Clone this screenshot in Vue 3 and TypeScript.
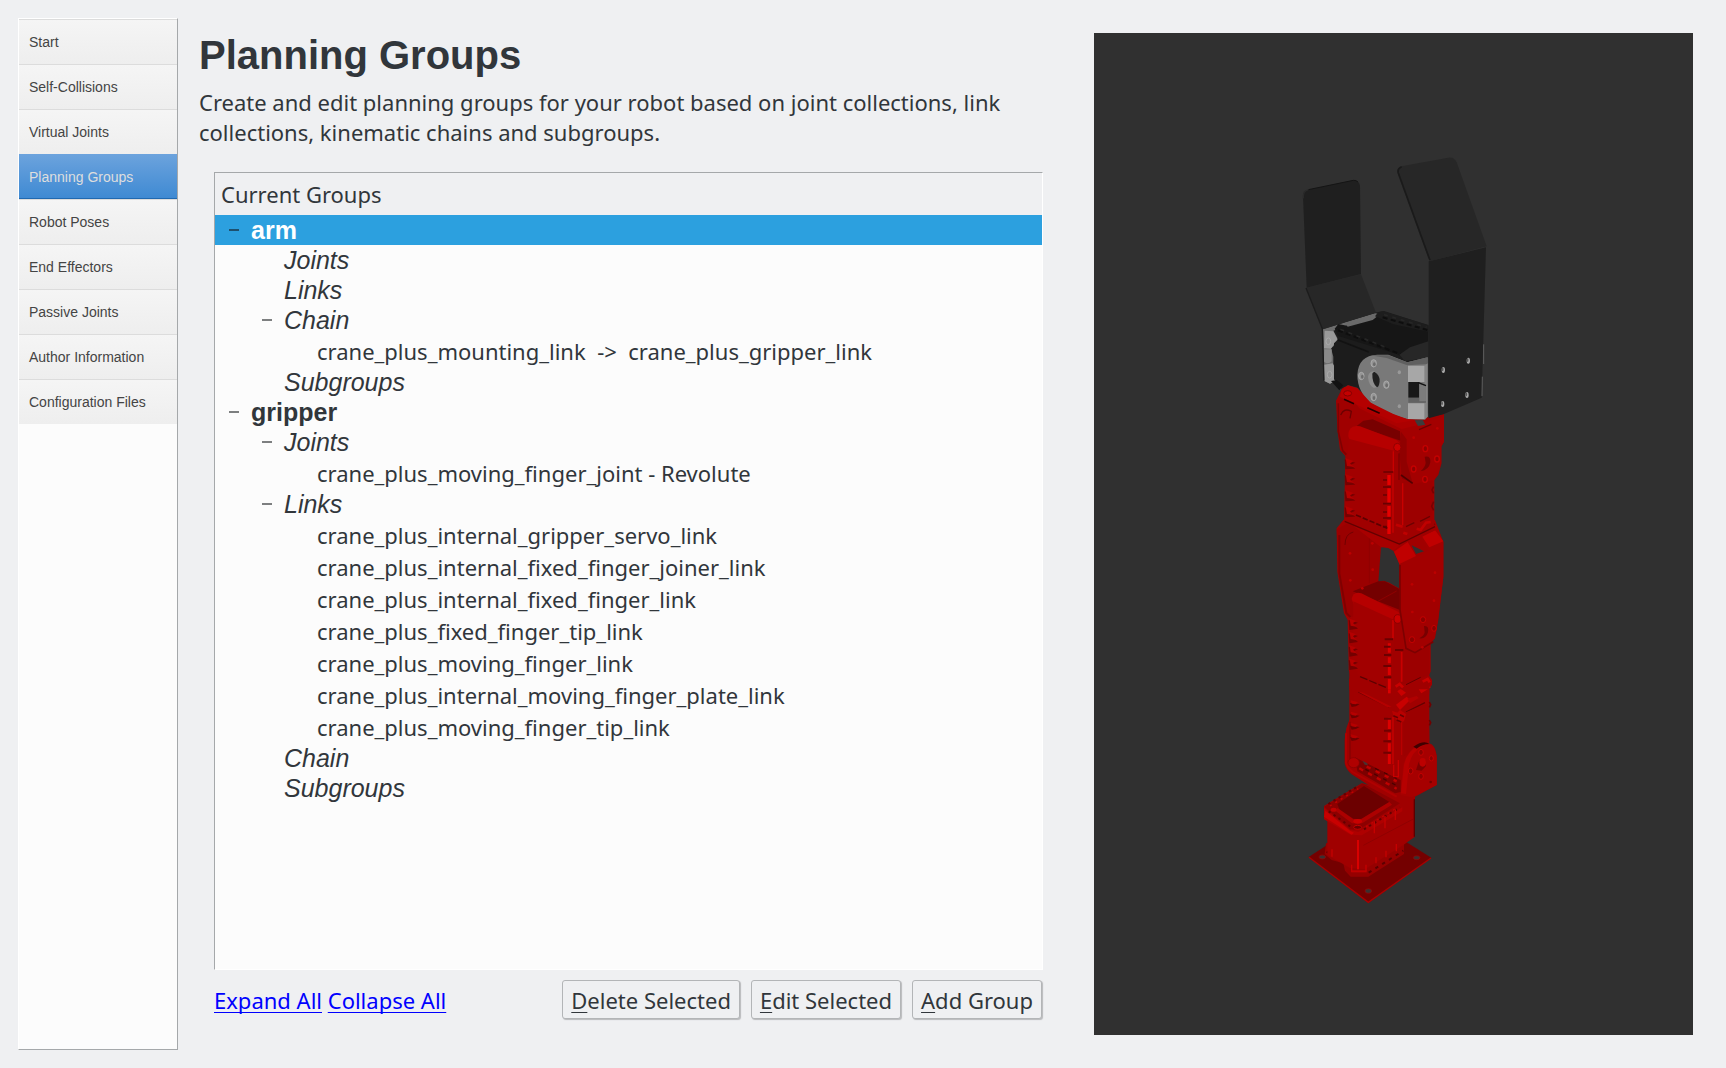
<script setup lang="ts">
interface TreeRow {
  label: string
  level: number
  kind: 'group' | 'section' | 'item'
  open?: boolean
  selected?: boolean
}

const steps: string[] = [
  'Start',
  'Self-Collisions',
  'Virtual Joints',
  'Planning Groups',
  'Robot Poses',
  'End Effectors',
  'Passive Joints',
  'Author Information',
  'Configuration Files',
]
const activeStep = 'Planning Groups'

const rows: TreeRow[] = [
  { label: 'arm', level: 0, kind: 'group', open: true, selected: true },
  { label: 'Joints', level: 1, kind: 'section' },
  { label: 'Links', level: 1, kind: 'section' },
  { label: 'Chain', level: 1, kind: 'section', open: true },
  { label: 'crane_plus_mounting_link  ->  crane_plus_gripper_link', level: 2, kind: 'item' },
  { label: 'Subgroups', level: 1, kind: 'section' },
  { label: 'gripper', level: 0, kind: 'group', open: true },
  { label: 'Joints', level: 1, kind: 'section', open: true },
  { label: 'crane_plus_moving_finger_joint - Revolute', level: 2, kind: 'item' },
  { label: 'Links', level: 1, kind: 'section', open: true },
  { label: 'crane_plus_internal_gripper_servo_link', level: 2, kind: 'item' },
  { label: 'crane_plus_internal_fixed_finger_joiner_link', level: 2, kind: 'item' },
  { label: 'crane_plus_internal_fixed_finger_link', level: 2, kind: 'item' },
  { label: 'crane_plus_fixed_finger_tip_link', level: 2, kind: 'item' },
  { label: 'crane_plus_moving_finger_link', level: 2, kind: 'item' },
  { label: 'crane_plus_internal_moving_finger_plate_link', level: 2, kind: 'item' },
  { label: 'crane_plus_moving_finger_tip_link', level: 2, kind: 'item' },
  { label: 'Chain', level: 1, kind: 'section' },
  { label: 'Subgroups', level: 1, kind: 'section' },
]

const actions: string[] = ['Delete Selected', 'Edit Selected', 'Add Group']

// Screw notches along the servo cases: [x, y] of each notch.
const column = (x: number, y: number, step: number, n: number): [number, number][] =>
  Array.from({ length: n }, (_, i) => [x, y + i * step] as [number, number])
</script>

<template>
  <main class="window">
    <nav class="steps">
      <a v-for="s in steps" :key="s" class="step" :class="{ active: s === activeStep }">{{ s }}</a>
    </nav>

    <section class="content">
      <h1>Planning Groups</h1>
      <p class="intro">Create and edit planning groups for your robot based on joint collections, link<br />collections, kinematic chains and subgroups.</p>

      <div class="tree">
        <div class="tree-head">Current Groups</div>
        <div
          v-for="(r, i) in rows"
          :key="i"
          class="row"
          :class="[r.kind, 'l' + r.level, { selected: r.selected }]"
        >
          <span class="toggle" :class="{ open: r.open }"></span>
          <span class="label">{{ r.label }}</span>
        </div>
      </div>

      <footer class="controls">
        <div class="links"><a>Expand All</a> <a>Collapse All</a></div>
        <div class="buttons">
          <button v-for="a in actions" :key="a"><span class="key">{{ a[0] }}</span>{{ a.slice(1) }}</button>
        </div>
      </footer>
    </section>

    <svg class="viewer" viewBox="1094 33 599 1002" width="599" height="1002">
      <!-- base plate and base servo -->
      <g transform="translate(1290 780) scale(.33333)">
        <path d="M56 231 L235 115 L424 233 L235 369Z" fill="#740000" />
        <path d="M57 232 L235 367 L423 234" fill="none" stroke="#a80000" stroke-width="4" />
        <g fill="#3a3030" stroke="#a00000" stroke-width="2">
          <ellipse cx="97" cy="231" rx="10" ry="6" />
          <ellipse cx="380" cy="233" rx="10" ry="6" />
          <ellipse cx="235" cy="333" rx="10" ry="7" />
        </g>
        <path d="M108 190 L104 222 L125 240 L160 250 L165 272 L182 290 L235 290 L342 222 L342 170Z" fill="#960000" />
        <path d="M236 278 L340 212 M110 215 L165 252" stroke="#5c0000" stroke-width="6" stroke-dasharray="10 14" />
        <path d="M102 78 L215 10 L375 50 L375 170 L340 195 L225 268 L180 264 L112 225 L112 120 L102 115Z" fill="#a00000" />
        <path d="M102 80 L218 10 L330 70 L205 150 L180 148Z" fill="#8c0000" />
        <path d="M142 72 L222 18 L298 66 L212 118 L190 116 L148 88Z" fill="#6c0000" />
        <path d="M142 84 L190 118 L213 118 L298 66 L306 74 L216 130 L186 130 L138 94Z" fill="#ac0000" />
        <path d="M102 84 L180 150 L205 156 L337 82 L337 94 L215 166 L182 164 L102 118Z" fill="#ae0000" />
        <path d="M106 92 L180 152 L192 158 L185 164 L102 110Z" fill="#c80000" />
        <path d="M115 72 L205 18 M116 94 L182 140 M222 148 L330 82" stroke="#620000" stroke-width="6" stroke-dasharray="7 11" />
        <path d="M120 78 L205 26 M228 140 L320 84" stroke="#c40000" stroke-width="4" stroke-dasharray="6 13" />
        <path d="M204 180 V268" stroke="#d80000" stroke-width="6" />
        <path d="M373 58 V170" stroke="#5c0000" stroke-width="4" />
        <path d="M220 196 L372 116" stroke="#860000" stroke-width="2" />
        <path d="M253 124V160M285 108V145M316 88V120M258 232V250M288 212V232M319 192V214M228 254V274M185 254V276M126 208V230" stroke="#c40000" stroke-width="4" />
        <path d="M184 274 H230" stroke="#c00000" stroke-width="6" />
        <ellipse cx="203" cy="124" rx="13" ry="7" fill="#c80000" />
        <ellipse cx="131" cy="89" rx="9" ry="6" fill="#c00000" />
        <ellipse cx="203" cy="142" rx="12" ry="6" fill="#6a0000" stroke="#c40000" stroke-width="3" />
      </g>

      <!-- shoulder servo and lower bracket -->
      <g transform="translate(1300 670) scale(.33333)">
        <path d="M148 150 L139 175 L134 210 L134 280 Q137 298 155 313 L232 362 L292 388 L345 380 L410 345 L410 255 Q405 225 388 220 L388 0 L148 0 Z" fill="#a00000" />
        <path d="M138 190 V276 Q140 292 158 306 L290 380" fill="none" stroke="#b00000" stroke-width="6" />
        <path d="M150 155 V265 L272 325" fill="none" stroke="#8c0000" stroke-width="5" />
        <path d="M165 262 L302 330 L302 366 L285 370 L172 304Z" fill="#7c0000" />
        <path d="M186 270 L202 279 L203 286 L194 284Z" fill="#4a3030" />
        <path d="M178 295 L290 356 M200 290 L290 334" stroke="#c00000" stroke-width="7" stroke-dasharray="13 17" />
        <path d="M196 298 L296 350 M225 295 L290 325" stroke="#4c0000" stroke-width="4" stroke-dasharray="12 18" />
        <ellipse cx="161" cy="278" rx="17" ry="15" fill="#b00000" stroke="#840000" stroke-width="2" />
        <path d="M162 65 L275 120 L278 318 L160 258Z" fill="#a10000" />
        <path d="M148 25 L292 88 L388 45 L388 72 L290 122 L148 60Z" fill="#a00000" />
        <path d="M175 66 L266 111" stroke="#700000" stroke-width="4" />
        <path d="M172 64 L190 68 L275 110 L262 112Z" fill="#b40000" />
        <path d="M318 126 L375 98 M300 52 L380 10" stroke="#640000" stroke-width="4" />
        <path d="M292 64 L302 56 L318 68 L304 78Z M356 58 L386 42 L393 52 L364 70Z" fill="#c80000" />
        <path d="M288 104 L320 80 L330 90 L300 120Z" fill="#c80000" />
        <path d="M322 86 L350 78 L356 84 L330 100Z" fill="#b00000" />
        <path d="M310 130 L386 100 L388 215 L310 260Z" fill="#9c0000" />
        <path d="M305 145 V255" stroke="#bc0000" stroke-width="3" />
        <path d="M268 0 V70" stroke="#dc0000" stroke-width="8" />
        <path d="M268 143V177M268 188V210M268 220V245M268 252V282" stroke="#dc0000" stroke-width="9" />
        <path d="M279 140V282 M281 284 V320 H295 V270" fill="none" stroke="#c80000" stroke-width="4" />
        <path d="M256 12h18M254 36h20M252 146h22M252 182h22M250 214h24M250 248h24" stroke="#700000" stroke-width="6" />
        <g v-for="(p, i) in column(150, 95, 34, 4)" :key="i" :transform="`translate(${p[0]} ${p[1]})`">
          <path d="M0 4 L29 8 L18 14 L5 16Z" fill="#6c0000" />
          <path d="M2 -4 L24 2 L17 8 L5 6Z" fill="#b60000" />
        </g>
        <path d="M388 96l4 8-4 8M388 150l4 8-4 8" fill="none" stroke="#700000" stroke-width="5" />
        <path d="M302 375 L310 285 Q320 245 350 228 Q382 213 403 235 L410 260 V345 L345 378 L335 382Z" fill="#a60000" />
        <path d="M303 370 L312 285 Q322 240 358 228 L366 228 Q336 246 327 282 L318 372Z" fill="#b60000" />
        <path d="M340 230 Q372 209 388 222 Q366 222 350 236Z" fill="#400000" />
        <g fill="#8a0000" stroke="#c40000" stroke-width="3">
          <ellipse cx="363" cy="247" rx="7" ry="9" /><ellipse cx="394" cy="265" rx="6" ry="8" />
          <ellipse cx="332" cy="303" rx="7" ry="9" /><ellipse cx="363" cy="319" rx="7" ry="9" />
        </g>
        <path d="M355 278 Q365 258 378 272 L378 288 L365 302 L348 300Z" fill="#7c0000" />
        <ellipse cx="368" cy="277" rx="10" ry="13" fill="#bc0000" />
        <circle cx="392" cy="336" r="4" fill="#740000" />
        <path d="M276 122l16 6 8-8 18 12-6 22-14 4-18-20Z" fill="#b80000" />
        <path d="M280 137l14 6M300 134l12 6M290 150l14 6" stroke="#680000" stroke-width="5" />
      </g>

      <!-- forearm bracket and elbow servo -->
      <g transform="translate(1300 520) scale(.33333)">
        <path d="M110 25 L130 0 L405 0 L430 65 L430 170 L415 300 L405 355 L392 370 V455 L386 465 L396 480 V496 L388 500 V508 H154 V502 L148 498 V478 L154 472 L146 450 V430 L143 300 L132 280 L112 155Z" fill="#a00000" />
        <path d="M110 28 L138 12 L160 17 L245 80 L238 185 L175 245 L175 285 L150 292 L135 280 L115 160Z" fill="#9a0000" />
        <path d="M118 45 V160 L139 279 L151 291" fill="none" stroke="#800000" stroke-width="6" />
        <path d="M135 75 Q135 42 160 36" fill="none" stroke="#700000" stroke-width="3" />
        <path d="M208 50V190" stroke="#900000" stroke-width="3" />
        <path d="M243 82 Q265 78 280 92 L299 132 L299 206 L268 188 L250 182 L235 185Z" fill="#303030" />
        <path d="M160 17 L245 50 L300 75 L280 92 Q262 80 243 82Z" fill="#a80000" />
        <path d="M135 0 L295 67 L405 12" fill="none" stroke="#760000" stroke-width="5" />
        <path d="M158 214 L235 184 L255 184 L300 208 V270Z" fill="#740000" />
        <path d="M230 246 L290 213" stroke="#900000" stroke-width="3" />
        <path d="M155 237 Q160 213 184 220 L294 275 Q304 283 300 304 L280 306 L161 252Z" fill="#b60000" />
        <path d="M160 244 L283 300 L276 500 L175 465 L158 420Z" fill="#a20000" />
        <path d="M305 390 L388 382 L388 465 L304 495Z" fill="#9c0000" />
        <path d="M279 300 V355 M305 396 V485" fill="none" stroke="#c80000" stroke-width="5" />
        <path d="M268 370V398M268 412V430M268 440V465M268 476V508" stroke="#dc0000" stroke-width="9" />
        <path d="M254 358h25M252 380h20M252 405h22M250 438h24M252 472h22M285 390h25" stroke="#6a0000" stroke-width="6" />
        <ellipse cx="293" cy="297" rx="11" ry="13" fill="#c80000" stroke="#8c0000" stroke-width="3" />
        <g v-for="(p, i) in column(146, 300, 40, 4)" :key="i" :transform="`translate(${p[0]} ${p[1]})`">
          <path d="M0 0 L28 8 L15 14 L28 26 L2 30Z" fill="#740000" />
          <path d="M3 -4 L22 3 L13 9 L24 20 L6 17Z" fill="#b40000" />
        </g>
        <path d="M180 470 L262 504" stroke="#5c0000" stroke-width="4" stroke-dasharray="24 6" />
        <path d="M282 92 L322 65 L350 110 L385 92 L365 50 L405 30 L430 65 V170 L414 300 L405 345 Q380 385 345 397 L310 385 L300 260 L298 130Z" fill="#a20000" />
        <path d="M335 76 L372 94 L348 102Z" fill="#303030" />
        <path d="M282 95 L323 66 L348 108 L298 132Z M367 50 L405 31 L430 64 L388 82Z" fill="#c00000" />
        <path d="M300 135 V270 L318 385 L345 398 L400 365" fill="none" stroke="#7c0000" stroke-width="5" />
        <g fill="#8a0000" stroke="#c40000" stroke-width="3">
          <ellipse cx="369" cy="299" rx="8" ry="9" /><ellipse cx="402" cy="325" rx="7" ry="9" /><ellipse cx="336" cy="359" rx="8" ry="9" />
        </g>
        <path d="M372 318 Q388 316 384 337 Q378 358 358 355 Q373 347 374 337Z" fill="#780000" />
        <g fill="#bc0000"><circle v-for="(p, i) in ([[150,100],[217,70],[218,149],[151,181],[187,205],[405,158],[336,193],[402,242],[337,276],[367,382]] as [number, number][])" :key="i" :cx="p[0]" :cy="p[1]" r="4" /></g>
        <path d="M287 500 l12 -8 10 10 M368 485l15-8 6 10" fill="none" stroke="#c80000" stroke-width="8" />
        <path d="M318 494 L362 472" stroke="#600000" stroke-width="3" />
      </g>

      <!-- upper arm bracket and wrist servo -->
      <g transform="translate(1300 380) scale(.33333)">
        <path d="M108 62 L128 22 L150 20 L355 118 L432 102 V185 L424 200 V252 L415 285 L403 300 V440 L408 450 L300 495 L132 425 L136 228 L120 210 L113 155Z" fill="#a00000" />
        <path d="M115 70 V155 L128 212 L139 224" fill="none" stroke="#800000" stroke-width="5" />
        <path d="M128 22 L150 18 L250 85 L315 116 L350 122 L354 146 L322 160 L300 145 L178 85Z" fill="#ac0000" />
        <path d="M122 105 Q132 82 154 94 L150 115" fill="none" stroke="#6c0000" stroke-width="4" />
        <path d="M170 138 L190 122 L218 118 L300 154 L302 182Z" fill="#780000" />
        <path d="M145 168 Q145 132 180 139 L290 181 Q306 192 300 214 L276 213 L149 181Z" fill="#b60000" />
        <path d="M146 176 L281 212 L270 450 L168 405 L138 388Z" fill="#a20000" />
        <path d="M310 304 L398 298 V405 L309 435Z" fill="#9d0000" />
        <path d="M302 148 L355 135 L432 108 V185 L424 198 L424 250 L403 300 L340 312 L306 270Z" fill="#a30000" />
        <path d="M303 155 L320 178 V245 L338 310 L306 296 L298 220Z" fill="#900000" />
        <path d="M303 285 L338 310" stroke="#500000" stroke-width="5" />
        <path d="M357 149 L394 133" stroke="#6c0000" stroke-width="4" />
        <path d="M280 214 V278 M279 280V458 M308 310 V435" fill="none" stroke="#c80000" stroke-width="4" />
        <path d="M267 285V315M267 325V368M267 378V410M267 420V462" stroke="#e60000" stroke-width="10" />
        <path d="M250 276h30M249 300h12M249 321h24M249 345h12M249 371h24M249 396h12M249 414h24M249 440h12" stroke="#680000" stroke-width="5" />
        <path d="M297 220V300" stroke="#740000" stroke-width="3" />
        <ellipse cx="292" cy="202" rx="11" ry="12" fill="#c80000" stroke="#8e0000" stroke-width="3" />
        <g v-for="(p, i) in column(136, 238, 48, 4)" :key="i" :transform="`translate(${p[0]} ${p[1]})`">
          <path d="M-2 0 L30 10 L15 17 L30 28 L0 30Z" fill="#760000" />
          <path d="M1 -3 L24 5 L14 13 L27 23 L5 20Z" fill="#b40000" />
        </g>
        <g fill="#8c0000" stroke="#c40000" stroke-width="4">
          <ellipse cx="376" cy="206" rx="7" ry="9" /><ellipse cx="411" cy="237" rx="7" ry="9" />
          <ellipse cx="341" cy="267" rx="7" ry="9" /><ellipse cx="375" cy="298" rx="7" ry="9" />
        </g>
        <path d="M374 230 Q393 226 391 247 Q387 270 362 274 Q376 260 377 248Z" fill="#780000" />
        <circle cx="341" cy="173" r="4" fill="#bc0000" /><circle cx="412" cy="145" r="4" fill="#bc0000" />
        <path d="M168 405 L262 445" stroke="#5c0000" stroke-width="5" stroke-dasharray="16 6" />
        <path d="M134 424 L298 492 L405 440" fill="none" stroke="#620000" stroke-width="4" />
        <path d="M288 434l20 6M310 458l12 4M350 446l12 4 16-22 14-2" fill="none" stroke="#c00000" stroke-width="8" />
        <path d="M318 440l25-12M360 424l30-15" stroke="#6c0000" stroke-width="4" />
        <path d="M401 320l-5 10 5 10M401 365l-6 14 6 12" fill="none" stroke="#780000" stroke-width="5" />
      </g>

      <!-- gripper servo -->
      <g transform="translate(1280 280) scale(.33333)">
        <path d="M127 148 L285 98 L310 94 L445 135 V400 L340 395 L270 362 L232 322 L204 314 L184 326 L165 305 L132 300Z" fill="#1c1c1c" />
        <path d="M129 148 L285 100 L300 102 L190 140 L160 152 L172 174 L173 188 L153 205 L160 230 V255 L172 278 L170 300 L150 311 L132 302Z" fill="#6e6e6e" />
        <path d="M134 152 L160 154 L172 178 L153 206 L132 205Z M132 254 L158 250 L172 275 L170 300 L150 311 L132 302Z" fill="#999" />
        <path d="M133 208 H155 V244 Q145 255 132 245Z" fill="#8a8a8a" />
        <path d="M164 146 L175 132 L215 140 L295 105 L445 137 V235 L385 242 L350 222 L175 168Z" fill="#161616" />
        <path d="M194 128 L285 101 L296 106 L278 120 L203 140Z" fill="#6a6a6a" />
        <path d="M295 96 L312 93 L445 136 V155 L340 133 L285 109Z" fill="#1d1d1d" />
        <path d="M174 151 L365 224 M308 112 L442 150" stroke="#0e0e0e" stroke-width="6" stroke-dasharray="15 10" />
        <path d="M181 148 L320 203 M312 104 L440 142" stroke="#262626" stroke-width="5" stroke-dasharray="12 14" />
        <path d="M358 224 L390 202 L445 184 V233 L375 244Z" fill="#272727" />
        <path d="M162 190 L175 178 L270 214 L240 240 V325 L204 314 L185 325 L162 298Z" fill="#1c1c1c" />
        <path d="M174 180 L266 216" stroke="#121212" stroke-width="5" />
        <path d="M153 303 L170 300 L190 316 L178 331Z" fill="#121212" />
        <path d="M292 224 H325 L382 247 L443 232 V410 L435 419 L383 418 Q320 400 272 368 Q232 335 232 284 Q235 226 292 224Z" fill="#797979" />
        <path d="M270 226 L325 226 L382 247 L443 232 V252 L382 256 L320 234Z" fill="#606060" />
        <path d="M385 306 H418 V353 H385Z" fill="#181818" />
        <path d="M384 257 H434 V306 H384Z M384 370 H434 V417 H384Z" fill="#a7a7a7" />
        <path d="M434 257 L443 250 V410 L434 417Z" fill="#858585" />
        <path d="M418 308 L438 316 V368 H385 V354 H418Z" fill="#626262" />
        <path d="M418 312 L438 318 V364 H418Z" fill="#7c7c7c" />
        <path d="M415 308 L438 317" stroke="#111" stroke-width="4" />
        <path d="M264 291 Q265 276 281 274 Q300 283 299 310 Q294 326 280 323 Q266 315 264 291Z" fill="#8e8e8e" />
        <path d="M277 281 Q279 275 284 276 Q300 285 299 305 Q297 320 291 322 Q276 309 277 281Z" fill="#202020" />
        <g fill="#949494" stroke="#aaa" stroke-width="3">
          <ellipse cx="281" cy="250" rx="8" ry="11" /><ellipse cx="244" cy="288" rx="8" ry="11" />
          <ellipse cx="319" cy="314" rx="8" ry="11" /><ellipse cx="281" cy="351" rx="8" ry="11" />
          <ellipse cx="145" cy="184" rx="7" ry="10" /><ellipse cx="149" cy="284" rx="7" ry="10" />
        </g>
        <g fill="#6c6c6c"><ellipse cx="283" cy="253" rx="4" ry="6" /><ellipse cx="247" cy="290" rx="4" ry="6" /><ellipse cx="320" cy="316" rx="4" ry="6" /><ellipse cx="282" cy="354" rx="4" ry="6" /></g>
        <ellipse cx="358" cy="277" rx="5" ry="6" fill="#999" /><ellipse cx="358" cy="379" rx="5" ry="6" fill="#999" />
        <path d="M184 330 L204 316 L232 324 L272 368 L340 402 L383 418 L405 420 L350 430 L180 350Z" fill="#b40000" />
        <path d="M192 358 L222 371 M262 383 L299 400" stroke="#240000" stroke-width="5" />
        <ellipse cx="203" cy="340" rx="12" ry="8" fill="#c40000" stroke="#840000" stroke-width="3" />
        <path d="M404 421 L428 420 L436 434 L414 438Z" fill="#3c3c3c" />
        <path d="M78 24 L243 -17 L288 98 L127 148Z" fill="#272727" />
        <path d="M78 24 L127 146 L132 302" fill="none" stroke="#1c1c1c" stroke-width="4" />
        <path d="M446 -56 L618 -98 L605 353 L492 402 L446 415Z" fill="#1f1f1f" />
        <path d="M611 193 V252 M607 290 L606 348" fill="none" stroke="#777" stroke-width="2" />
        <g fill="#aaa"><ellipse cx="490" cy="270" rx="5" ry="9" /><ellipse cx="565" cy="242" rx="5" ry="9" /><ellipse cx="488" cy="372" rx="5" ry="9" /><ellipse cx="561" cy="345" rx="5" ry="9" /></g>
        <g fill="#555"><ellipse cx="488" cy="268" rx="2.5" ry="6" /><ellipse cx="563" cy="240" rx="2.5" ry="6" /><ellipse cx="486" cy="370" rx="2.5" ry="6" /><ellipse cx="559" cy="343" rx="2.5" ry="6" /></g>
      </g>

      <!-- finger plates -->
      <g transform="translate(1280 140) scale(.33333)">
        <path d="M69 168 Q69 152 85 149 L220 121 Q237 121 240 137 L243 402 L80 443Z" fill="#1f1f1f" />
        <path d="M85 149 L220 121 Q228 120 234 126" fill="none" stroke="#141414" stroke-width="3" />
        <path d="M70 175 Q68 153 85 149" fill="none" stroke="#2a2a2a" stroke-width="4" />
        <path d="M352 98 Q350 84 368 78 L505 53 Q522 50 530 67 L620 319 L453 363 L445 354Z" fill="#272727" />
        <path d="M365 80 Q351 86 355 99 L450 361" fill="none" stroke="#1a1a1a" stroke-width="5" />
      </g>
    </svg>
  </main>
</template>

<style>
body {
  background: #eff0f2;
}
</style>

<style scoped>
.window {
  box-sizing: border-box;
  display: flex;
  align-items: flex-start;
  width: 1726px;
  height: 1068px;
  padding: 18px 33px 18px 18px;
  background: #eff0f2;
  color: #31363b;
  font-family: "Noto Sans", sans-serif;
  font-size: 22px;
  overflow: hidden;
}
.steps {
  box-sizing: border-box;
  display: flex;
  flex-direction: column;
  width: 160px;
  height: 1032px;
  border: 1px solid #fff;
  border-right-color: #a5a8aa;
  border-bottom-color: #a5a8aa;
  background: #fcfcfc;
}
.step {
  box-sizing: border-box;
  height: 45px;
  padding-left: 10px;
  border-top: 1px solid #dcdcdc;
  background: linear-gradient(#f5f5f5, #eeeeee);
  color: #444;
  font: 14px/45px "Liberation Sans", Arial, sans-serif;
}
.step.active {
  border-top: 0;
  border-bottom: 1px solid #2069b0;
  background: linear-gradient(#6ca3dd, #3f8ad3);
  color: #dedede;
  line-height: 46px;
}
.content {
  width: 844px;
  margin-left: 21px;
}
h1 {
  margin: 12px 0 0;
  font: bold 40px/50px "Liberation Sans", Arial, sans-serif;
}
.intro {
  margin: 7px 0 0;
  line-height: 30px;
  white-space: nowrap;
}
.tree {
  box-sizing: border-box;
  height: 798px;
  margin: 25px 0 0 15px;
  border: 1px solid #fff;
  border-left-color: #a5a8aa;
  border-top-color: #a5a8aa;
  background: #fcfcfc;
}
.tree-head {
  height: 42px;
  padding-left: 6px;
  background: #eff0f2;
  line-height: 42px;
}
.row {
  display: flex;
  height: 30px;
  white-space: pre;
}
.row.l0 { padding-left: 14px; }
.row.l1 { padding-left: 47px; }
.row.l2 { padding-left: 80px; }
.toggle {
  width: 10px;
  height: 2px;
  margin: 14px 12px 0 0;
}
.toggle.open { background: #7d7f80; }
.selected .toggle.open { background: #1d516f; }
.group .label {
  font: bold 25px/31px "Liberation Sans", Arial, sans-serif;
}
.section .label {
  font: italic 25px/31px "Liberation Sans", Arial, sans-serif;
}
.row.item {
  height: 32px;
  line-height: 33px;
}
.row.selected {
  background: #2ca0df;
  color: #fff;
}
.controls {
  display: flex;
  justify-content: space-between;
  margin: 10px 1px 0 15px;
  line-height: 40px;
}
.links a {
  color: #00f;
  text-decoration: underline;
  text-decoration-thickness: 1px;
  text-underline-offset: 3px;
  text-decoration-skip-ink: none;
}
.buttons {
  display: flex;
  gap: 11px;
}
button {
  box-sizing: border-box;
  height: 39px;
  padding: 0 8px 1px;
  border: 1px solid #b3b5b7;
  border-radius: 3px;
  background: #eff0f2;
  box-shadow: 1px 1px 1px #b9babc;
  color: inherit;
  font: 22px/38px "Noto Sans", sans-serif;
}
.key {
  text-decoration: underline;
  text-decoration-thickness: 1px;
  text-underline-offset: 3px;
  text-decoration-skip-ink: none;
}
.viewer {
  display: block;
  flex: none;
  margin: 15px 0 0 51px;
  background: #303030;
}
</style>
